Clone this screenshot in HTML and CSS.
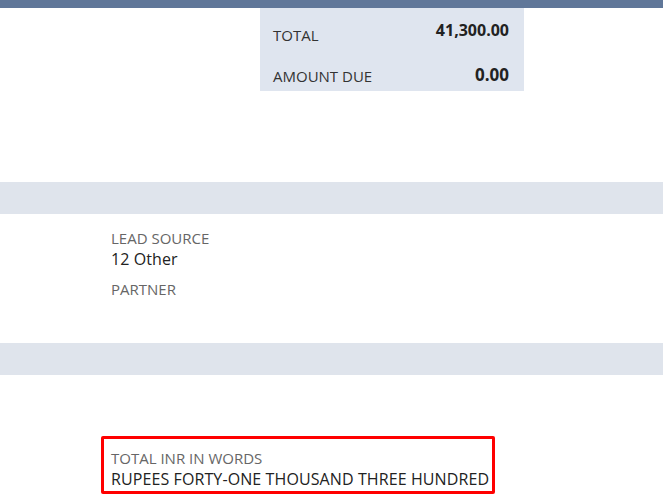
FILE: index.html
```html
<!DOCTYPE html>
<html>
<head>
<meta charset="utf-8">
<link rel="stylesheet" href="styles.css">
</head>
<body>
<div class="topbar"></div>
<div class="summary">
  <div class="row row-total">
    <span class="label">TOTAL</span>
    <span class="amount">41,300.00</span>
  </div>
  <div class="row row-due">
    <span class="label">AMOUNT DUE</span>
    <span class="amount big">0.00</span>
  </div>
</div>
<div class="band band-1"></div>
<div class="fields">
  <div class="field">
    <div class="flabel">LEAD SOURCE</div>
    <div class="fvalue">12 Other</div>
  </div>
  <div class="field">
    <div class="flabel">PARTNER</div>
  </div>
</div>
<div class="band band-2"></div>
<div class="words-wrap">
  <div class="words">
    <div class="flabel">TOTAL INR IN WORDS</div>
    <div class="fvalue">RUPEES FORTY-ONE THOUSAND THREE HUNDRED</div>
  </div>
</div>
</body>
</html>
```
FILE: styles.css
```css
html, body {
  margin: 0;
  padding: 0;
  background: #ffffff;
  font-family: "Open Sans", "Liberation Sans", sans-serif;
  color: #222222;
}
.topbar {
  height: 8px;
  background: #607799;
}
.summary {
  margin-left: 260px;
  width: 264px;
  height: 83px;
  box-sizing: border-box;
  padding: 0 15px 0 13px;
  background: #dfe5ef;
}
.row {
  display: flex;
  justify-content: space-between;
  align-items: flex-start;
}
.row-total {
  height: 41px;
  padding-top: 12px;
  box-sizing: border-box;
}
.row-due {
  height: 42px;
  padding-top: 10px;
  box-sizing: border-box;
}
.label {
  font-size: 15px;
  line-height: 20px;
  color: #333333;
}
.row-total .label {
  margin-top: 5px;
}
.row-due .label {
  margin-top: 7px;
}
.amount {
  font-size: 16px;
  line-height: 20px;
  font-weight: 700;
  color: #222222;
}
.amount.big {
  font-size: 17px;
  line-height: 22px;
  margin-top: 5px;
}
.band {
  height: 32px;
  background: #dfe4ec;
}
.band-1 {
  margin-top: 91px;
}
.fields {
  padding: 14px 0 0 111px;
  height: 129px;
  box-sizing: border-box;
}
.field {
  margin-bottom: 9px;
}
.flabel {
  font-size: 15px;
  line-height: 20px;
  color: #666666;
}
.fvalue {
  font-size: 16px;
  line-height: 22px;
  letter-spacing: 0.1px;
  color: #222222;
}
.words-wrap {
  padding: 61px 0 0 101px;
}
.words {
  width: 394px;
  height: 58px;
  box-sizing: border-box;
  border: 3px solid #ff0000;
  border-radius: 2px;
  padding: 9px 0 0 7px;
}
```
